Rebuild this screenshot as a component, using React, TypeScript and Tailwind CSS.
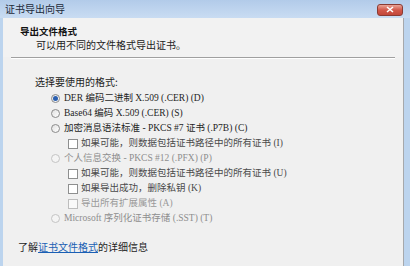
import React from "react";

const cjk = { fontFamily: '"Noto Sans CJK SC", "Noto Sans", sans-serif' };
const opt = { fontFamily: '"Liberation Serif", "Noto Sans CJK SC", serif' };

function Radio({ checked, disabled }: { checked?: boolean; disabled?: boolean }) {
  return (
    <span
      className={`inline-flex items-center justify-center w-[9px] h-[9px] rounded-full border shrink-0 ${
        disabled ? "border-[#c4c4c4] bg-[#f4f4f4]" : "border-[#8b8b8b] bg-gradient-to-br from-[#e0e0e0] to-white"
      }`}
    >
      {checked && <span className="w-[5px] h-[5px] rounded-full bg-[#2a5fb0]" />}
    </span>
  );
}

function Check({ disabled }: { disabled?: boolean }) {
  return (
    <span
      className={`inline-block w-[10px] h-[10px] border shrink-0 ${
        disabled ? "border-[#bdbdbd] bg-[#f9f9f9]" : "border-[#8e8f8f] bg-white"
      }`}
    />
  );
}

function RadioRow({ label, checked, disabled }: { label: string; checked?: boolean; disabled?: boolean }) {
  return (
    <div className="flex items-center gap-[4px] h-[15px] pl-[48px]">
      <Radio checked={checked} disabled={disabled} />
      <span style={opt} className={`text-[9.5px] leading-none whitespace-nowrap ${disabled ? "text-[#8e8e8e]" : "text-[#1e1e1e]"}`}>
        {label}
      </span>
    </div>
  );
}

function CheckRow({ label, disabled }: { label: string; disabled?: boolean }) {
  return (
    <div className="flex items-center gap-[3px] h-[15px] pl-[65px]">
      <Check disabled={disabled} />
      <span style={opt} className={`text-[9.5px] leading-none whitespace-nowrap ${disabled ? "text-[#9a9a9a]" : "text-[#4a4a4a]"}`}>
        {label}
      </span>
    </div>
  );
}

export default function App() {
  return (
    <div style={cjk} className="w-[410px] h-[266px] overflow-hidden flex flex-col bg-[#bcd4ee]">
      {/* title bar */}
      <div className="h-[18px] shrink-0 flex items-center justify-between pl-[5px] pr-[7px] bg-gradient-to-b from-[#b2cbe9] to-[#c9dcf2]">
        <span className="text-[10px] leading-none text-[#1c2a3a]">证书导出向导</span>
        <div className="w-[26px] h-[12px] mt-[1px] rounded-[3px] border border-[#8a3b33] bg-gradient-to-b from-[#e8a397] via-[#d2584a] to-[#c2473a] flex items-center justify-center">
          <svg width="8" height="7" viewBox="0 0 8 7">
            <path d="M1 1 L7 6 M7 1 L1 6" stroke="white" strokeWidth="1.6" />
          </svg>
        </div>
      </div>

      <div className="flex-1 flex pl-[3px] pr-[6px]">
        <div className="flex-1 flex flex-col bg-[#f0f0f0] border-r border-[#a6a8ab]">
          {/* header */}
          <div className="h-[39px] shrink-0 flex flex-col gap-[2px] pt-[8px] pl-[17px] bg-[#f2f2f2]">
            <span className="text-[9.5px] leading-[11px] font-bold text-[#111]">导出文件格式</span>
            <span className="text-[10px] leading-[11px] pl-[16px] text-[#222]">可以用不同的文件格式导出证书。</span>
          </div>
          <div className="h-px mx-[8px] bg-[#a0a0a0]" />
          <div className="h-px mx-[8px] bg-white" />

          <div className="flex flex-col pt-[15px]">
            <div className="h-[16px] flex items-center pl-[32px]">
              <span className="text-[10px] leading-none text-[#1e1e1e]">选择要使用的格式:</span>
            </div>
            <div className="h-[1px]" />
            <RadioRow checked label="DER 编码二进制 X.509 (.CER) (D)" />
            <RadioRow label="Base64 编码 X.509 (.CER) (S)" />
            <RadioRow label="加密消息语法标准 - PKCS #7 证书 (.P7B) (C)" />
            <CheckRow label="如果可能，则数据包括证书路径中的所有证书 (I)" />
            <RadioRow disabled label="个人信息交换 - PKCS #12 (.PFX) (P)" />
            <CheckRow label="如果可能，则数据包括证书路径中的所有证书 (U)" />
            <CheckRow label="如果导出成功，删除私钥 (K)" />
            <CheckRow disabled label="导出所有扩展属性 (A)" />
            <RadioRow disabled label="Microsoft 序列化证书存储 (.SST) (T)" />
          </div>

          <div className="pt-[16px] pl-[15px] flex items-center">
            <span className="text-[10px] leading-none text-[#1e1e1e]">
              了解<span className="text-[#1a5fb4] underline">证书文件格式</span>的详细信息
            </span>
          </div>
        </div>
      </div>
    </div>
  );
}
